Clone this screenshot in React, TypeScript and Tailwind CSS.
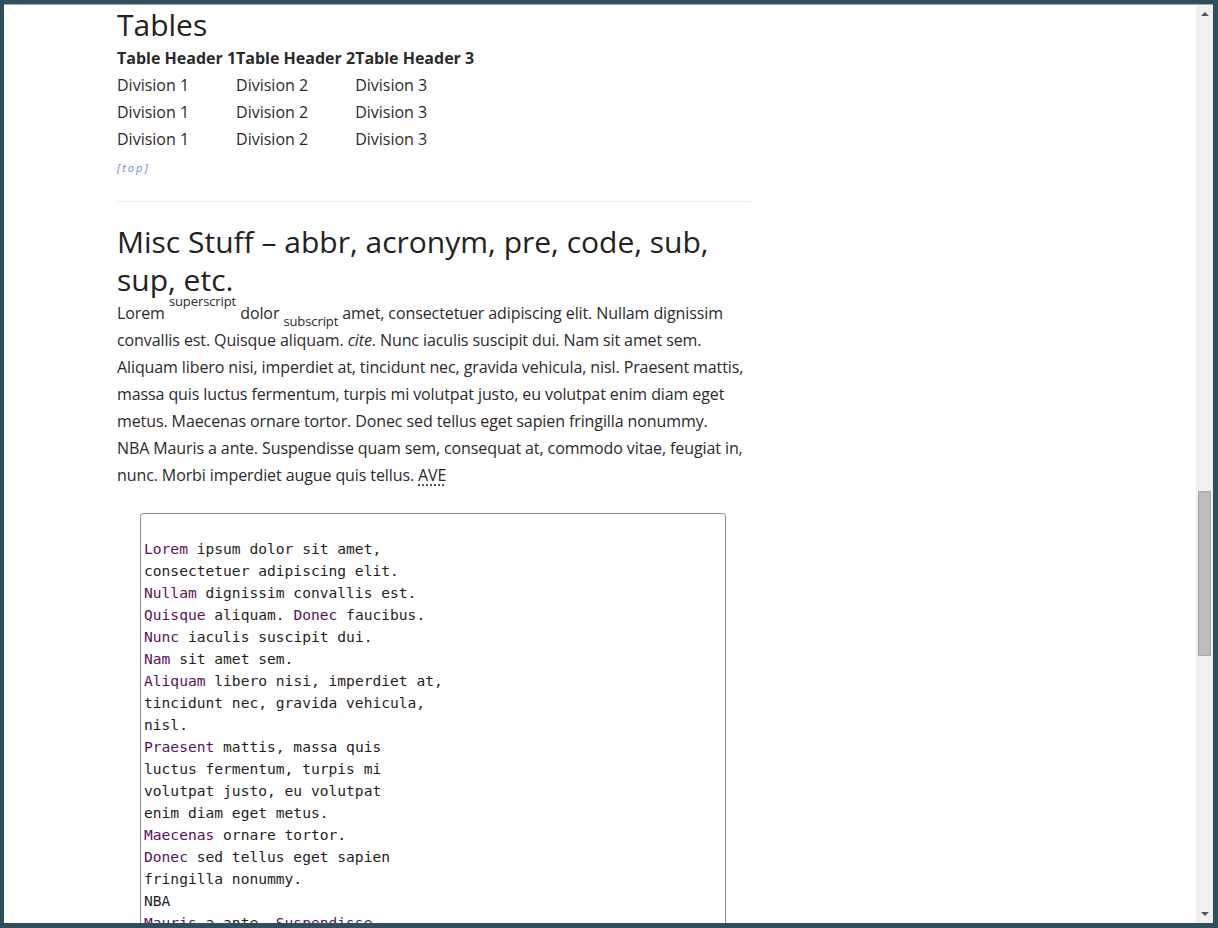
const codeLines: string[][] = [
  [""],
  ["Lorem", " ipsum dolor sit amet,"],
  ["", "consectetuer adipiscing elit."],
  ["Nullam", " dignissim convallis est."],
  ["Quisque", " aliquam. ", "Donec", " faucibus."],
  ["Nunc", " iaculis suscipit dui."],
  ["Nam", " sit amet sem."],
  ["Aliquam", " libero nisi, imperdiet at,"],
  ["", "tincidunt nec, gravida vehicula,"],
  ["", "nisl."],
  ["Praesent", " mattis, massa quis"],
  ["", "luctus fermentum, turpis mi"],
  ["", "volutpat justo, eu volutpat"],
  ["", "enim diam eget metus."],
  ["Maecenas", " ornare tortor."],
  ["Donec", " sed tellus eget sapien"],
  ["", "fringilla nonummy."],
  ["", "NBA"],
  ["Mauris", " a ante. ", "Suspendisse"],
  ["", "quam sem, consequat at,"],
  ["", "commodo vitae, feugiat in,"],
  ["", "nunc. Morbi imperdiet augue"],
];

function CodeLine({ parts }: { parts: string[] }) {
  return (
    <div className="h-[22px]">
      {parts.map((p, i) =>
        i % 2 === 0 ? (
          <span key={i} className="text-[#5a1060]">
            {p}
          </span>
        ) : (
          <span key={i}>{p}</span>
        )
      )}
    </div>
  );
}

export default function App() {
  const rows = [1, 2, 3];
  return (
    <div className="h-[928px] w-[1218px] overflow-hidden bg-[#2f4f5c] pb-[5px] pl-[4px] pr-[5px] pt-[4px]">
      <div className="flex h-full border-t border-[#a3abae] bg-white">
        <main className="flex-1 overflow-hidden font-['Open_Sans',sans-serif] text-[#2a2a2a]">
          <div className="ml-[113px] w-[634px]">
            <h2 className="text-[30px] leading-[40px] text-[#222]">Tables</h2>
            <table className="text-[16px] leading-[27px]">
              <thead>
                <tr>
                  <th className="p-0 text-left font-bold">Table Header 1</th>
                  <th className="p-0 text-left font-bold">Table Header 2</th>
                  <th className="p-0 text-left font-bold">Table Header 3</th>
                </tr>
              </thead>
              <tbody>
                {rows.map((r) => (
                  <tr key={r}>
                    <td className="p-0">Division 1</td>
                    <td className="p-0">Division 2</td>
                    <td className="p-0">Division 3</td>
                  </tr>
                ))}
              </tbody>
            </table>
            <p className="mt-[1px] text-[11px] italic leading-[27px] tracking-[2px] text-[#6f86c9]">
              [top]
            </p>
            <hr className="mt-[20px] border-[#ececec]" />
            <h2 className="mt-[21px] text-[30px] leading-[38px] text-[#222]">
              Misc Stuff – abbr, acronym, pre, code, sub, sup, etc.
            </h2>
            <p className="mt-[1px] text-[16px] leading-[27px] tracking-[-0.1px]">
              Lorem{" "}
              <sup className="relative -top-[13px] text-[13px]">superscript</sup>{" "}
              dolor{" "}
              <sub className="relative top-[7px] text-[13px]">subscript</sub>{" "}
              amet, consectetuer adipiscing elit. Nullam dignissim convallis est. Quisque aliquam.{" "}
              <cite className="italic">cite</cite>. Nunc iaculis suscipit dui. Nam sit amet sem.
              Aliquam libero nisi, imperdiet at, tincidunt nec, gravida vehicula, nisl. Praesent
              mattis, massa quis luctus fermentum, turpis mi volutpat justo, eu volutpat enim diam
              eget metus. Maecenas ornare tortor. Donec sed tellus eget sapien fringilla nonummy.
              <br />
              <abbr title="National Basketball Association" className="no-underline">NBA</abbr>{" "}
              Mauris a ante. Suspendisse quam sem, consequat at, commodo vitae, feugiat in, nunc.
              Morbi imperdiet augue quis tellus.{" "}
              <abbr title="Avenue" className="underline decoration-dotted underline-offset-4">
                AVE
              </abbr>
            </p>
            <pre className="ml-[23px] mt-[24px] w-[586px] rounded-t-[3px] border border-[#8a8a8a] px-[3px] pt-[2px] font-['DejaVu_Sans_Mono',monospace] text-[14.6px] leading-[22px] text-[#1e1e1e]">
              {codeLines.map((parts, i) => (
                <CodeLine key={i} parts={parts} />
              ))}
            </pre>
          </div>
        </main>
        <div className="flex w-[17px] shrink-0 flex-col items-center bg-[#f0f0f0]">
          <div className="mt-[7px] h-0 w-0 border-x-[4px] border-b-[4px] border-x-transparent border-b-[#505050]" />
          <div className="mt-[475px] h-[165px] w-[13px] border border-[#a8a8a8] bg-[#bcbcbc]" />
          <div className="flex-1" />
          <div className="mb-[7px] h-0 w-0 border-x-[4px] border-t-[4px] border-x-transparent border-t-[#505050]" />
        </div>
      </div>
    </div>
  );
}
